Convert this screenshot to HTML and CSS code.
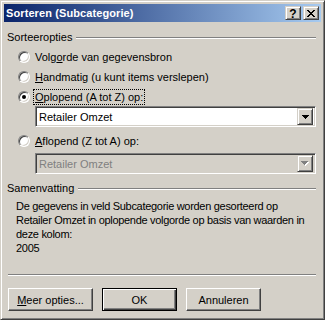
FILE: index.html
```html
<!DOCTYPE html>
<html lang="nl">
<head>
  <meta charset="UTF-8" />
  <title>Sorteren (Subcategorie)</title>
  <link rel="stylesheet" href="styles.css">
</head>
<body>
  <div class="window">
    <div class="titlebar">
      <span class="title">Sorteren (Subcategorie)</span>
      <div class="caption-btns">
        <span class="cbtn help">?</span>
        <span class="cbtn close">
          <svg width="8" height="7" viewBox="0 0 8 7">
            <path d="M0 0h2v1H0z M6 0h2v1H6z M1 1h2v1H1z M5 1h2v1H5z M2 2h4v1H2z M3 3h2v1H3z M2 4h4v1H2z M1 5h2v1H1z M5 5h2v1H5z M0 6h2v1H0z M6 6h2v1H6z" fill="#000"/>
          </svg>
        </span>
      </div>
    </div>

    <div class="content">
      <div class="group-head"><span>Sorteeropties</span><span class="rule"></span></div>

      <div class="options">
        <label class="radio-row first"><span class="radio"></span><span class="lbl">Volg<u>o</u>rde van gegevensbron</span></label>
        <label class="radio-row"><span class="radio"></span><span class="lbl"><u>H</u>andmatig (u kunt items verslepen)</span></label>
        <label class="radio-row"><span class="radio checked"></span><span class="lbl focus"><u>O</u>plopend (A tot Z) op:</span></label>
        <div class="combo">
          <span class="combo-text">Retailer Omzet</span>
          <span class="combo-btn">
            <svg width="7" height="4" viewBox="0 0 7 4"><path d="M0 0h7v1H0z M1 1h5v1H1z M2 2h3v1H2z M3 3h1v1H3z" fill="#000"/></svg>
          </span>
        </div>
        <label class="radio-row after-combo"><span class="radio"></span><span class="lbl"><u>A</u>flopend (Z tot A) op:</span></label>
        <div class="combo disabled">
          <span class="combo-text">Retailer Omzet</span>
          <span class="combo-btn">
            <svg width="8" height="5" viewBox="0 0 8 5">
              <path d="M1 1h7v1H1z M2 2h5v1H2z M3 3h3v1H3z M4 4h1v1H4z" fill="#fff"/>
              <path d="M0 0h7v1H0z M1 1h5v1H1z M2 2h3v1H2z M3 3h1v1H3z" fill="#808080"/>
            </svg>
          </span>
        </div>
      </div>

      <div class="group-head summary-head"><span>Samenvatting</span><span class="rule"></span></div>
      <p class="summary">
        De gegevens in veld Subcategorie worden gesorteerd op<br>
        Retailer Omzet in oplopende volgorde op basis van waarden in<br>
        deze kolom:<br>
        2005
      </p>

      <div class="sep"></div>

      <div class="buttons">
        <button class="btn wide"><u>M</u>eer opties...</button>
        <button class="btn default">OK</button>
        <button class="btn">Annuleren</button>
      </div>
    </div>
  </div>
</body>
</html>
```

FILE: styles.css
```css
html, body {
  margin: 0;
  padding: 0;
  background: #d4d0c8;
}

body {
  font-family: "Liberation Sans", Arial, sans-serif;
  font-size: 11px;
  color: #000;
}

.window {
  width: 325px;
  height: 320px;
  box-sizing: border-box;
  border: 1px solid;
  border-color: #d4d0c8 #404040 #404040 #d4d0c8;
  box-shadow: inset 1px 1px #fff, inset -1px -1px #808080;
  padding: 3px;
  background: #d4d0c8;
  overflow: hidden;
}

/* titelbalk */
.titlebar {
  height: 18px;
  display: flex;
  align-items: center;
  background: linear-gradient(to right, #0a246a, #a6caf0);
  padding: 0 2px 0 2px;
}

.title {
  color: #fff;
  font-weight: bold;
  font-size: 11px;
  line-height: 18px;
  letter-spacing: 0.1px;
  white-space: nowrap;
}

.caption-btns {
  margin-left: auto;
  display: flex;
  gap: 2px;
}

.cbtn {
  width: 16px;
  height: 14px;
  box-sizing: border-box;
  border: 1px solid;
  border-color: #d4d0c8 #404040 #404040 #d4d0c8;
  box-shadow: inset 1px 1px #fff, inset -1px -1px #808080;
  background: #d4d0c8;
  display: flex;
  align-items: center;
  justify-content: center;
}

.cbtn.help {
  font-weight: bold;
  font-size: 12px;
  line-height: 12px;
  padding-top: 1px;
}

/* inhoud */
.content {
  padding: 9px 5px 0 3px;
}

.group-head {
  display: flex;
  align-items: center;
  height: 13px;
  line-height: 13px;
  gap: 4px;
}

.group-head .rule {
  flex: 1;
  height: 0;
  border-top: 1px solid #808080;
  border-bottom: 1px solid #fff;
}

.options {
  display: flex;
  flex-direction: column;
}

.radio-row {
  display: flex;
  align-items: center;
  height: 16px;
  margin-top: 4px;
  margin-left: 11px;
  gap: 3px;
  white-space: nowrap;
}

.radio-row.first {
  margin-top: 5px;
}

.radio-row.after-combo {
  margin-top: 6px;
}

.radio {
  width: 12px;
  height: 12px;
  box-sizing: border-box;
  border-radius: 50%;
  border: 1px solid;
  border-color: #808080 #fff #fff #808080;
  box-shadow: inset 1px 1px #404040, inset -1px -1px #d4d0c8;
  background: #fff;
  display: flex;
  align-items: center;
  justify-content: center;
  flex: none;
}

.radio.checked::after {
  content: "";
  width: 4px;
  height: 4px;
  border-radius: 50%;
  background: #000;
}

.lbl {
  padding: 0 1px;
  line-height: 14px;
  border: 1px solid transparent;
}

.lbl.focus {
  border: 1px dotted #000;
}

.combo {
  height: 21px;
  box-sizing: border-box;
  margin-left: 28px;
  margin-top: 1px;
  border: 1px solid;
  border-color: #808080 #fff #fff #808080;
  box-shadow: inset 1px 1px #404040, inset -1px -1px #d4d0c8;
  background: #fff;
  display: flex;
  align-items: center;
  padding: 2px;
}

.combo-text {
  padding-left: 1px;
}

.combo-btn {
  margin-left: auto;
  width: 16px;
  height: 17px;
  box-sizing: border-box;
  border: 1px solid;
  border-color: #d4d0c8 #404040 #404040 #d4d0c8;
  box-shadow: inset 1px 1px #fff, inset -1px -1px #808080;
  background: #d4d0c8;
  display: flex;
  align-items: center;
  justify-content: center;
}

.combo.disabled {
  margin-top: 4px;
  background: #d4d0c8;
}

.combo.disabled .combo-text {
  color: #808080;
}

.summary-head {
  margin-top: 8px;
}

.summary {
  margin: 4px 0 0 9px;
  line-height: 14px;
  letter-spacing: -0.3px;
  white-space: nowrap;
}

.sep {
  margin: 19px 0 0 1px;
  border-top: 1px solid #808080;
  border-bottom: 1px solid #fff;
}

.buttons {
  display: flex;
  gap: 9px;
  margin: 12px 0 0 1px;
}

.btn {
  width: 75px;
  height: 23px;
  box-sizing: border-box;
  font: inherit;
  color: #000;
  background: #d4d0c8;
  border: 1px solid;
  border-color: #fff #404040 #404040 #fff;
  box-shadow: inset -1px -1px #808080;
  padding: 0;
}

.btn.wide {
  width: 85px;
}

.btn.default {
  border: 1px solid #000;
  box-shadow: inset 1px 1px #fff, inset -1px -1px #404040, inset -2px -2px #808080;
}
```
